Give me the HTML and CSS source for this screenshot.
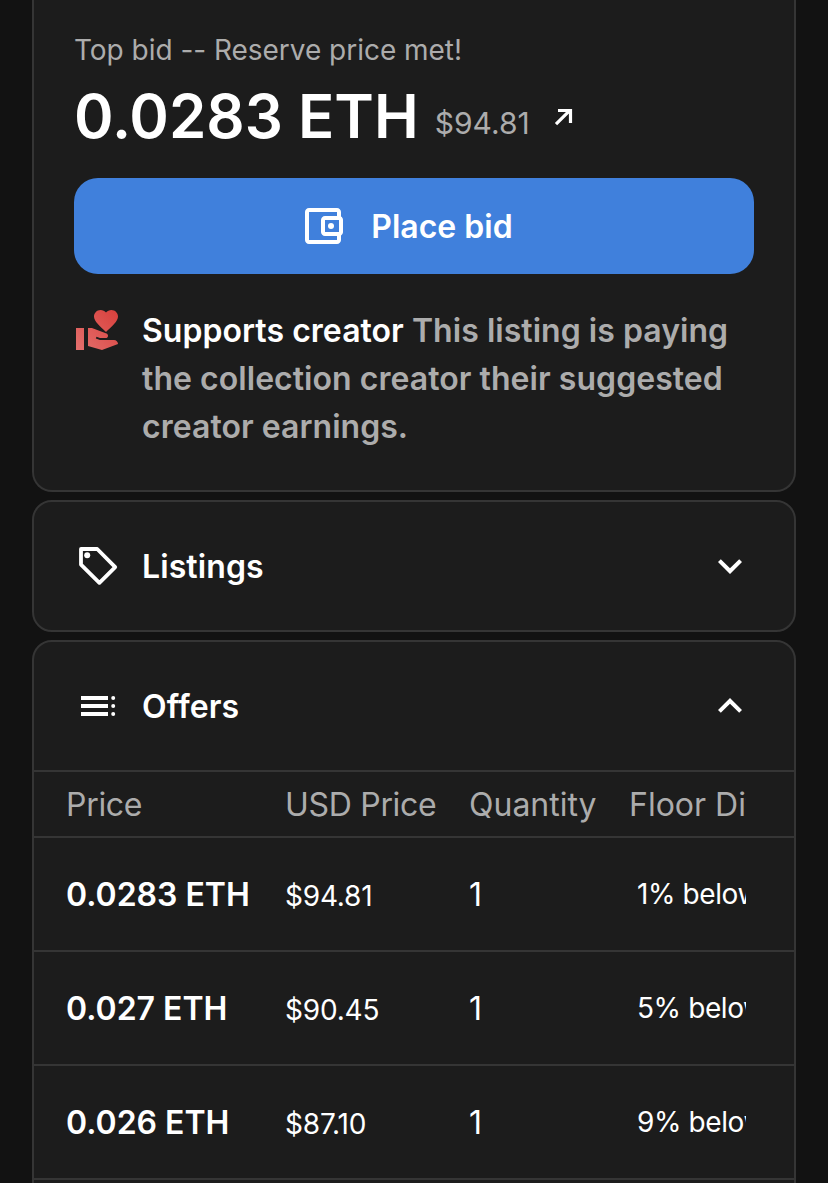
FILE: index.html
```
<!DOCTYPE html>
<html lang="en">
<head>
    <meta charset="UTF-8">
    <meta name="viewport" content="width=device-width, initial-scale=1.0">
    <title>Place bid</title>
    <link rel="stylesheet" href="styles.css">
</head>
<body>
    <main>
        <section class="card bid-card">
            <p class="bid-label">Top bid -- Reserve price met!</p>
            <div class="price-row">
                <span class="price">0.0283 ETH</span>
                <span class="price-usd">$94.81</span>
                <svg class="arrow" viewBox="0 0 20 20"><path d="M2 17.2L15.6 3.6M4 3.5h12.5v12.5" /></svg>
            </div>
            <button type="button" class="bid-button">
                <svg class="icon" viewBox="0 0 24 24">
                    <path d="M21 7.28V5c0-1.1-.9-2-2-2H5c-1.11 0-2 .9-2 2v14c0 1.1.89 2 2 2h14c1.1 0 2-.9 2-2v-2.28c.59-.35 1-.98 1-1.72V9c0-.74-.41-1.38-1-1.72zM20 9v6h-7V9h7zM5 19V5h14v2h-6c-1.1 0-2 .9-2 2v6c0 1.1.9 2 2 2h6v2H5z" />
                    <circle cx="16" cy="12" r="1.5" />
                </svg>
                <span>Place bid</span>
            </button>
            <div class="creator">
                <svg class="icon creator-icon" viewBox="0 0 24 24">
                    <defs>
                        <linearGradient id="creatorFill" x1="1" y1="22" x2="22" y2="2" gradientUnits="userSpaceOnUse">
                            <stop offset="0" stop-color="#e4706e" />
                            <stop offset="1" stop-color="#d8403c" />
                        </linearGradient>
                    </defs>
                    <path fill="url(#creatorFill)" d="M1 11h4v11H1zM16 3.25C16.65 2.49 17.66 2 18.7 2 20.55 2 22 3.45 22 5.3c0 2.27-2.91 4.9-6 7.7-3.09-2.81-6-5.44-6-7.7C10 3.45 11.45 2 13.3 2c1.04 0 2.05.49 2.7 1.25zM20 17h-7l-2.09-.73.33-.94L13 16h2.82c.65 0 1.18-.53 1.18-1.18 0-.49-.31-.93-.77-1.11L8.97 11H7v9.02L14 22l8.01-3c-.01-1.1-.9-2-2.01-2z" />
                </svg>
                <p><strong>Supports creator</strong> This listing is paying the collection creator their suggested creator earnings.</p>
            </div>
        </section>

        <section class="card">
            <div class="panel-header">
                <svg class="icon" viewBox="0 0 24 24">
                    <path class="tag-line" d="M3.5 3.5h8.1l9 9.1-7.9 7.8-9.2-9.1z" />
                    <circle cx="6.6" cy="6.6" r="1.5" />
                </svg>
                <h2>Listings</h2>
                <svg class="icon" viewBox="0 0 24 24"><path d="M16.59 8.59L12 13.17 7.41 8.59 6 10l6 6 6-6z" /></svg>
            </div>
        </section>

        <section class="card offers">
            <div class="panel-header">
                <svg class="icon" viewBox="0 0 24 24">
                    <path d="M3.5 7H17v2H3.5zM3.5 11H17v2H3.5zM3.5 15H17v2H3.5z" />
                    <circle cx="19.6" cy="8" r="1" />
                    <circle cx="19.6" cy="12" r="1" />
                    <circle cx="19.6" cy="16" r="1" />
                </svg>
                <h2>Offers</h2>
                <svg class="icon" viewBox="0 0 24 24"><path d="M12 8l-6 6 1.41 1.41L12 10.83l4.59 4.58L18 14z" /></svg>
            </div>
            <div class="row row-head">
                <span class="tight">Price</span>
                <span class="tight">USD Price</span>
                <span>Quantity</span>
                <span class="floor">Floor Difference</span>
            </div>
            <div class="row">
                <span class="eth">0.0283 ETH</span>
                <span class="usd">$94.81</span>
                <span class="qty">1</span>
                <span class="floor">1% below</span>
            </div>
            <div class="row">
                <span class="eth">0.027 ETH</span>
                <span class="usd">$90.45</span>
                <span class="qty">1</span>
                <span class="floor">5% below</span>
            </div>
            <div class="row">
                <span class="eth">0.026 ETH</span>
                <span class="usd">$87.10</span>
                <span class="qty">1</span>
                <span class="floor">9% below</span>
            </div>
        </section>
    </main>
</body>
</html>
```
FILE: styles.css
```
/* Global Styles */
* {
    box-sizing: border-box;
}

body {
    margin: 0;
    height: 1183px;
    overflow: hidden;
    font-family: Inter, sans-serif;
    background-color: #121212;
    color: #fff;
}

main {
    display: flex;
    flex-direction: column;
    gap: 8px;
    padding: 0 32px;
}

p, h2 {
    margin: 0;
}

.card {
    background-color: #1c1c1c;
    border: 2px solid #353535;
    border-radius: 20px;
}

.icon {
    width: 48px;
    height: 48px;
    flex: none;
    fill: currentColor;
}

/* Bid card */
.bid-card {
    height: 492px;
    padding: 30px 40px 0;
    border-top: none;
    border-radius: 0 0 20px 20px;
}

.bid-label {
    font-size: 28px;
    line-height: 40px;
    letter-spacing: -0.03px;
    color: #acacac;
}

.price-row {
    display: flex;
    align-items: flex-start;
    height: 108px;
    padding-top: 10px;
    line-height: 72px;
}

.price {
    font-size: 60px;
    font-weight: 600;
}

.price-usd {
    margin-left: 16px;
    padding-top: 7px;
    font-size: 30px;
    color: #acacac;
}

.arrow {
    width: 20px;
    height: 20px;
    margin-left: 24px;
    margin-top: 27px;
    fill: none;
    stroke: #fff;
    stroke-width: 3.2;
}

.bid-button {
    display: flex;
    align-items: center;
    justify-content: center;
    gap: 24px;
    width: 100%;
    height: 96px;
    padding: 0 16px 0 0;
    border: none;
    border-radius: 24px;
    background-color: #4080dc;
    color: #fff;
    font-family: inherit;
    font-size: 32px;
    font-weight: 600;
}

.creator {
    display: flex;
    gap: 20px;
    padding-top: 32px;
    font-size: 32px;
    font-weight: 600;
    line-height: 48px;
    letter-spacing: 0.04px;
    color: #acacac;
}

.creator p {
    padding-top: 1px;
}

.creator strong {
    font-weight: 600;
    color: #fff;
}

/* Panels */
.panel-header {
    display: flex;
    align-items: center;
    gap: 20px;
    height: 128px;
    padding: 0 40px;
}

.panel-header h2 {
    flex: 1;
    padding-top: 1px;
    font-size: 32px;
    font-weight: 600;
    letter-spacing: 0.1px;
}

.tag-line {
    fill: none;
    stroke: #fff;
    stroke-width: 1.9;
    stroke-linejoin: round;
}

/* Offers table */
.offers {
    height: 600px;
    overflow: hidden;
}

.row {
    display: grid;
    grid-template-columns: 219px 184px 160px 117px;
    align-items: center;
    height: 114px;
    padding-left: 32px;
    border-top: 2px solid #353535;
    font-size: 28px;
    white-space: nowrap;
}

.row:last-child {
    height: 116px;
    border-bottom: 2px solid #353535;
}

.row-head {
    height: 66px;
    font-size: 32px;
    color: #acacac;
}

.tight {
    letter-spacing: -0.3px;
}

.eth {
    font-size: 32px;
    font-weight: 600;
}

.usd {
    padding-top: 4px;
    letter-spacing: -0.2px;
}

.qty {
    font-size: 32px;
}

.floor {
    overflow: hidden;
}

.row:not(.row-head) .floor {
    padding-left: 8px;
    letter-spacing: -0.4px;
}
```
